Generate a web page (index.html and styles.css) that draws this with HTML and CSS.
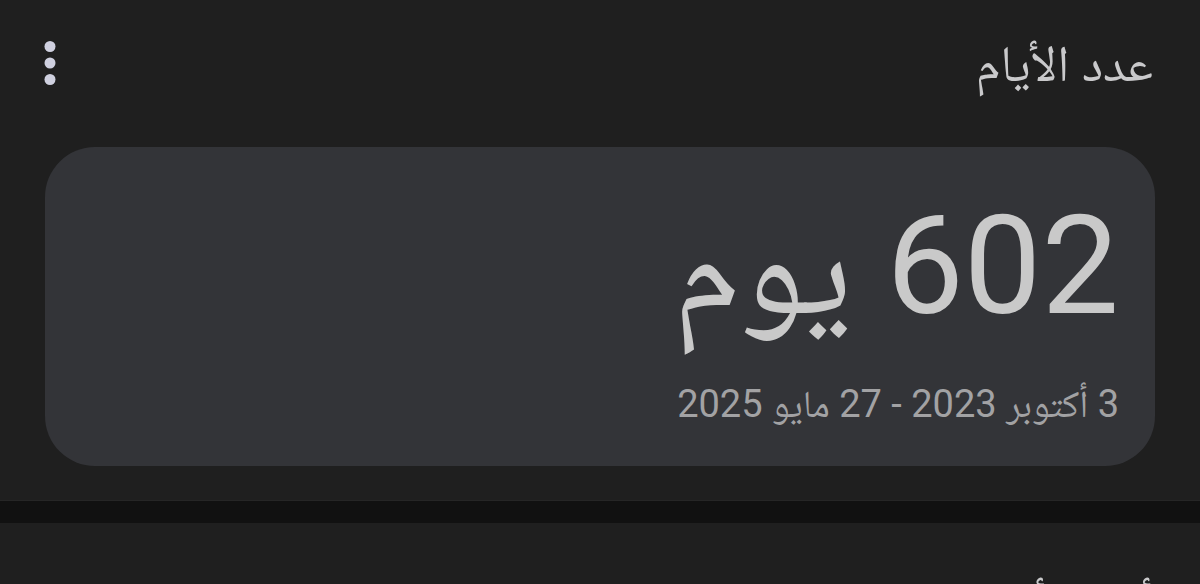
FILE: index.html
```html
<!DOCTYPE html>
<html lang="ar" dir="rtl">

<head>
    <meta charset="UTF-8" />
    <meta name="viewport" content="width=device-width, initial-scale=1.0" />
    <title>عدد الأيام</title>
    <link rel="stylesheet" href="styles.css">
</head>

<body>

    <section class="panel">
        <div class="top-bar">
            <h1 class="title">عدد الأيام</h1>
            <button class="menu-btn" aria-label="المزيد">
                <svg viewBox="0 0 24 24" width="66" height="66">
                    <circle cx="12" cy="6" r="2" />
                    <circle cx="12" cy="12" r="2" />
                    <circle cx="12" cy="18" r="2" />
                </svg>
            </button>
        </div>

        <div class="result-card">
            <div class="days">602 يوم</div>
            <div class="range">3 أكتوبر 2023 - 27 مايو 2025</div>
        </div>
    </section>

    <div class="divider"></div>

    <section class="panel next">
        <h2 class="title">أضف أو اطرح</h2>
    </section>

</body>

</html>
```

FILE: styles.css
```css
body {
    margin: 0;
    background: #1f1f1f;
    color: #c8c8c8;
    font-family: Roboto, "Noto Naskh Arabic", "Noto Sans Arabic", "DejaVu Sans", sans-serif;
    overflow: hidden;
}

.panel {
    padding: 0 45px 34px;
}

.top-bar {
    display: flex;
    align-items: center;
    justify-content: space-between;
    height: 147px;
}

.title {
    margin: 0 2px 8px 0;
    font-size: 51px;
    font-weight: normal;
    color: #c9c9cb;
}

.menu-btn {
    background: none;
    border: none;
    padding: 0;
    margin-left: -28px;
    margin-bottom: 21px;
    display: flex;
}

.menu-btn svg {
    fill: #cfd0df;
}

.result-card {
    background: #333438;
    border-radius: 50px;
    padding: 50px 36px 38px;
}

.days {
    font-size: 138px;
    line-height: 138px;
    color: #c9c9c9;
}

.range {
    margin-top: 45px;
    font-size: 38px;
    line-height: 48px;
    color: #a2a2a4;
}

.divider {
    height: 22px;
    background: #111111;
    border-top: 1px solid #262626;
}

.next {
    padding-top: 46px;
}
```
